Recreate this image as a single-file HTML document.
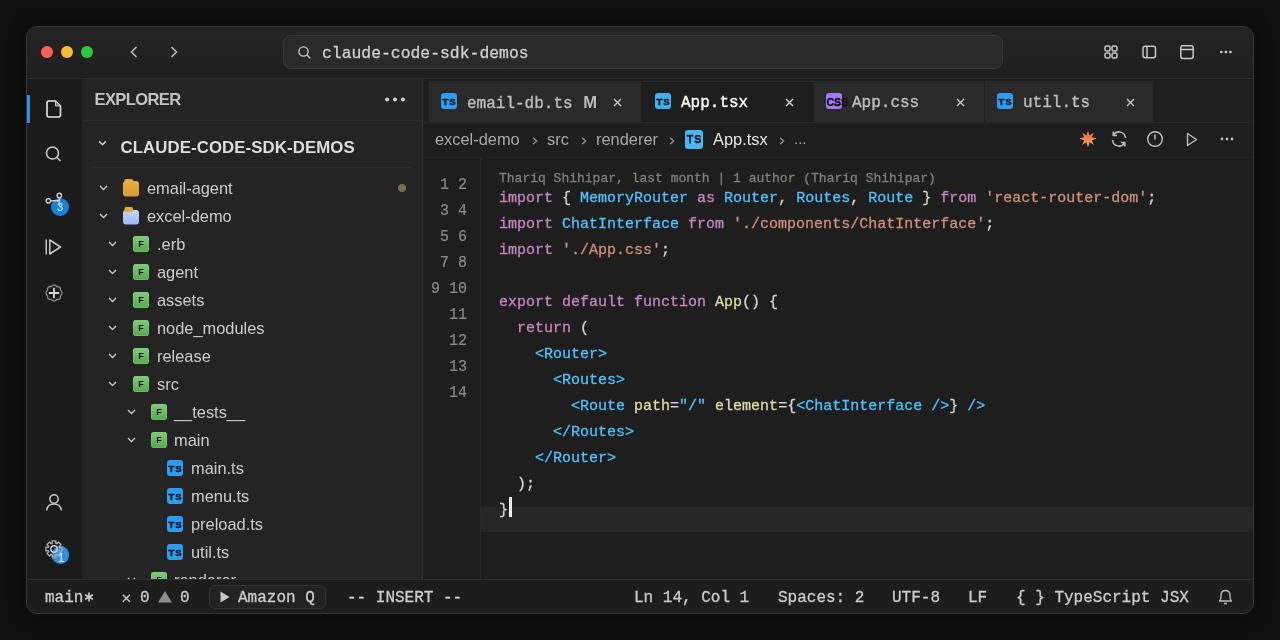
<!DOCTYPE html>
<html><head><meta charset="utf-8">
<style>
*{margin:0;padding:0;box-sizing:border-box}
html,body{width:1280px;height:640px;overflow:hidden;background:#101010;font-family:"Liberation Sans",sans-serif}
.a{position:absolute;white-space:pre}
.m{font-family:"Liberation Mono",monospace}
#win{will-change:transform;position:absolute;left:26px;top:26px;width:1228px;height:588px;border-radius:11px;background:#212121;border:1px solid #363636;overflow:hidden;box-shadow:0 2px 20px rgba(0,0,0,.35)}
#title{position:absolute;left:0;top:0;width:1226px;height:52px;background:linear-gradient(#252525,#1f1f1f);border-bottom:1px solid #2e2e2e}
.tl{position:absolute;top:19px;width:12px;height:12px;border-radius:50%}
#act{position:absolute;left:0;top:52px;width:55px;height:500px;background:#1b1b1b}
#side{position:absolute;left:55px;top:52px;width:341px;height:500px;background:#242424;border-right:1px solid #333333}
#editor{position:absolute;left:396px;top:52px;width:832px;height:500px;background:#1e1e1e}
#status{position:absolute;left:0;top:552px;width:1226px;height:35px;background:#1d1d1d;border-top:1px solid #2e2e2e}
svg{position:absolute;overflow:visible}
.row{position:absolute;left:0;width:340px;height:28px}
.rt{position:absolute;top:0;line-height:28px;font-size:16.4px;color:#cccccc;white-space:pre}
.chev{position:absolute;top:11px}
.fi{position:absolute;top:6px;width:16px;height:16px;border-radius:3px;background:linear-gradient(#80cb7a,#55aa50);box-shadow:inset 0 0 0 0.6px rgba(150,220,140,.5);color:#0a0a0a;font:bold 9px/16px "Liberation Sans",sans-serif;text-align:center}
.ts{position:absolute;width:16px;height:16px;border-radius:3px;background:#2d9df2;color:#06101a;font:bold 9.5px/18px "Liberation Sans",sans-serif;text-align:center;letter-spacing:0.9px;text-indent:0.9px;-webkit-text-stroke:0.35px #06101a}
.tab{position:absolute;top:2px;height:41px;background:#2a2a2a}
.tabt{position:absolute;top:2px;line-height:41px;font-family:"Liberation Mono",monospace;font-size:16px;color:#bdbdbd;white-space:pre;-webkit-text-stroke:0.35px currentColor}
.cl{position:absolute;top:13px}
.code{position:absolute;left:76px;font-family:"Liberation Mono",monospace;font-size:15px;line-height:26px;white-space:pre;color:#d4d4d4;-webkit-text-stroke:0.3px currentColor}
.k{color:#c586c0}.b{color:#4fc1ff}.s{color:#ce9178}.f{color:#dcdcaa}.p{color:#d4d4d4}
.ln{position:absolute;font-family:"Liberation Mono",monospace;font-size:15px;line-height:26px;color:#8a8a8a;white-space:pre;text-align:right;transform:scaleY(1.15);transform-origin:50% 17px;-webkit-text-stroke:0.2px currentColor}
.st{position:absolute;top:1px;line-height:34px;font-family:"Liberation Mono",monospace;font-size:16px;color:#cccccc;white-space:pre;-webkit-text-stroke:0.3px currentColor}
</style></head><body>
<div id="win">
  <div id="title">
    <div class="tl" style="left:14px;background:#fe5f57"></div>
    <div class="tl" style="left:34px;background:#febc2e"></div>
    <div class="tl" style="left:54px;background:#28c840"></div>
    <!-- nav arrows -->
    <svg style="left:103px;top:19px" width="8" height="12" viewBox="0 0 8 12"><path d="M6.5 1 L1.5 6 L6.5 11" fill="none" stroke="#c8c8c8" stroke-width="1.4"/></svg>
    <svg style="left:143px;top:19px" width="8" height="12" viewBox="0 0 8 12"><path d="M1.5 1 L6.5 6 L1.5 11" fill="none" stroke="#c8c8c8" stroke-width="1.4"/></svg>
    <!-- search -->
    <div style="position:absolute;left:256px;top:8px;width:720px;height:34px;border-radius:8px;background:#2a2a2a;border:1px solid #383838"></div>
    <svg style="left:271px;top:19px" width="13" height="13" viewBox="0 0 13 13"><circle cx="5.5" cy="5.5" r="4.6" fill="none" stroke="#c8c8c8" stroke-width="1.4"/><path d="M9 9 L12.2 12.2" stroke="#c8c8c8" stroke-width="1.4"/></svg>
    <div class="a m" style="left:295px;top:0.5px;line-height:52px;font-size:16.4px;color:#d0d0d0;-webkit-text-stroke:0.3px currentColor">claude-code-sdk-demos</div>
    <!-- right icons -->
    <svg style="left:1077px;top:18px" width="14" height="14" viewBox="0 0 14 14" fill="none" stroke="#c8c8c8" stroke-width="1.5"><rect x="1" y="1" width="5" height="5" rx="1.6"/><rect x="8" y="1" width="5" height="5" rx="1.6"/><rect x="1" y="8" width="5" height="5" rx="1.6"/><rect x="8" y="8" width="5" height="5" rx="1.6"/></svg>
    <svg style="left:1115px;top:18px" width="14" height="14" viewBox="0 0 14 14" fill="none" stroke="#c8c8c8" stroke-width="1.5"><rect x="1" y="1.2" width="12.5" height="11.6" rx="2.2"/><path d="M5 1.2 V12.8"/></svg>
    <svg style="left:1153px;top:18px" width="14" height="14" viewBox="0 0 14 14" fill="none" stroke="#c8c8c8" stroke-width="1.5"><rect x="0.8" y="0.8" width="12.4" height="12.6" rx="2.2"/><path d="M0.8 4.6 H13.2"/></svg>
    <svg style="left:1193px;top:23px" width="12" height="4" viewBox="0 0 12 4" fill="#d0d0d0"><circle cx="1.4" cy="2" r="1.35"/><circle cx="5.9" cy="2" r="1.35"/><circle cx="10.4" cy="2" r="1.35"/></svg>
  </div>

  <!-- activity bar -->
  <div id="act">
    <div style="position:absolute;left:0;top:16px;width:2.5px;height:28px;background:#2f8ff0;border-radius:0 1px 1px 0"></div>
    <!-- file -->
    <svg style="left:19px;top:21px" width="16" height="18" viewBox="0 0 16 18" fill="none" stroke="#e8e8e8" stroke-width="1.6" stroke-linejoin="round"><path d="M3 1 H9.5 L14.5 6 V15 Q14.5 17 12.5 17 H3 Q1 17 1 15 V3 Q1 1 3 1 Z"/><path d="M9.5 1.5 V6 H14" fill="#777" stroke-width="0.8"/></svg>
    <!-- search -->
    <svg style="left:18px;top:67px" width="18" height="17" viewBox="0 0 18 17" fill="none" stroke="#c8c8c8" stroke-width="1.6"><circle cx="7.5" cy="7" r="6"/><path d="M11.8 11.3 L15.5 15"/></svg>
    <!-- source control -->
    <div style="position:absolute;left:24px;top:119px;width:18px;height:18px;border-radius:50%;background:#1581d8"></div>
    <div style="position:absolute;left:24px;top:119px;width:18px;height:18px;color:#f0f0f0;font:11px/19px 'Liberation Sans',sans-serif;text-align:center">3</div>
    <svg style="left:15px;top:110px" width="26" height="26" viewBox="0 0 26 26" fill="none" stroke="#cfcfcf" stroke-width="1.4"><circle cx="6.4" cy="11.8" r="2.2"/><circle cx="17.3" cy="6.4" r="2.2"/><path d="M8.6 11.8 H17.3 M17.3 8.6 V17"/></svg>
    <!-- run -->
    <svg style="left:18px;top:160px" width="17" height="16" viewBox="0 0 17 16" fill="none" stroke="#c8c8c8" stroke-width="1.5"><path d="M1.2 0.5 V15.5"/><path d="M4.8 1 L15.5 8 L4.8 15 Z" stroke-linejoin="round"/></svg>
    <!-- extensions -->
    <svg style="left:18px;top:205px" width="18" height="18" viewBox="0 0 18 18" fill="none" stroke="#8a8a8a" stroke-width="1.3"><path d="M15.47 6.32 Q18.60 9.00 15.47 11.68 Q15.79 15.79 11.68 15.47 Q9.00 18.60 6.32 15.47 Q2.21 15.79 2.53 11.68 Q-0.60 9.00 2.53 6.32 Q2.21 2.21 6.32 2.53 Q9.00 -0.60 11.68 2.53 Q15.79 2.21 15.47 6.32 Z" stroke-linejoin="round"/><path d="M9 3.8 V14.2 M3.8 9 H14.2" stroke="#d8d8d8" stroke-width="1.8"/></svg>
    <!-- account -->
    <svg style="left:18px;top:415px" width="18" height="17" viewBox="0 0 18 17" fill="none" stroke="#c8c8c8" stroke-width="1.5"><circle cx="9" cy="5" r="4.2"/><path d="M1.5 16.5 Q2.5 10 9 10 Q15.5 10 16.5 16.5"/></svg>
    <!-- gear -->
    <div style="position:absolute;left:24.5px;top:467px;width:17.5px;height:17.5px;border-radius:50%;background:#2e8fe6"></div>
    <svg style="left:18px;top:461px" width="18" height="18" viewBox="0 0 18 18" fill="none" stroke="#a8a8a8" stroke-width="1.4"><path d="M7.25 3.26 L7.13 0.91 L10.87 0.91 L10.75 3.26 A6.0 6.0 0 0 1 11.82 3.70 L11.82 3.70 L13.40 1.96 L16.04 4.60 L14.30 6.18 A6.0 6.0 0 0 1 14.74 7.25 L14.74 7.25 L17.09 7.13 L17.09 10.87 L14.74 10.75 A6.0 6.0 0 0 1 14.30 11.82 L14.30 11.82 L16.04 13.40 L13.40 16.04 L11.82 14.30 A6.0 6.0 0 0 1 10.75 14.74 L10.75 14.74 L10.87 17.09 L7.13 17.09 L7.25 14.74 A6.0 6.0 0 0 1 6.18 14.30 L6.18 14.30 L4.60 16.04 L1.96 13.40 L3.70 11.82 A6.0 6.0 0 0 1 3.26 10.75 L3.26 10.75 L0.91 10.87 L0.91 7.13 L3.26 7.25 A6.0 6.0 0 0 1 3.70 6.18 L3.70 6.18 L1.96 4.60 L4.60 1.96 L6.18 3.70 A6.0 6.0 0 0 1 7.25 3.26 Z" stroke-linejoin="round"/><circle cx="9" cy="9" r="3.2" stroke="#cfcfcf"/></svg>
    <div style="position:absolute;left:29px;top:473px;width:10px;height:12px;color:#f4f4f4;font:12px/12px 'Liberation Sans',sans-serif;text-align:center">1</div>
  </div>

  <!-- sidebar -->
  <div id="side">
    <div class="a" style="left:12.5px;top:-1px;line-height:42px;font-size:16.5px;letter-spacing:-0.6px;font-weight:bold;color:#c2c2c2">EXPLORER</div>
    <svg style="left:303px;top:17.5px" width="20" height="5" viewBox="0 0 20 5" fill="#d0d0d0"><circle cx="2.1" cy="2.5" r="2"/><circle cx="10" cy="2.5" r="2"/><circle cx="17.9" cy="2.5" r="2"/></svg>
    <div style="position:absolute;left:0;top:41px;width:340px;height:1px;background:#2c2c2c"></div>
    <svg style="left:16px;top:61px" width="9" height="6" viewBox="0 0 8 5"><path d="M1 1 L4 4 L7 1" fill="none" stroke="#c8c8c8" stroke-width="1.4"/></svg>
    <div class="a" style="left:38.5px;top:68.5px;line-height:0;font-size:16.8px;letter-spacing:0.1px;font-weight:bold;color:#dedede">CLAUDE-CODE-SDK-DEMOS</div>
    <div style="position:absolute;left:8px;top:88px;width:323px;height:1px;background:#2e2e2e"></div>

    <div class="row" style="top:95px"><svg class="chev" style="left:17px" width="9" height="6" viewBox="0 0 9 6"><path d="M1 1 L4.5 4.5 L8 1" fill="none" stroke="#c8c8c8" stroke-width="1.4"/></svg><svg style="left:41px;top:5px" width="16" height="18" viewBox="0 0 16 18"><defs><linearGradient id="fy" x1="0" y1="0" x2="0" y2="1"><stop offset="0" stop-color="#e8ad45"/><stop offset="1" stop-color="#d99a30"/></linearGradient></defs><rect x="1.5" y="0" width="8.5" height="5" rx="1.5" fill="#e6a83e"/><rect x="0" y="2" width="16" height="15.5" rx="3" fill="url(#fy)"/></svg><div class="rt" style="left:65px">email-agent</div><div style="position:absolute;left:316px;top:10px;width:8px;height:8px;border-radius:50%;background:#7b6d4b"></div></div>
<div class="row" style="top:123px"><svg class="chev" style="left:17px" width="9" height="6" viewBox="0 0 9 6"><path d="M1 1 L4.5 4.5 L8 1" fill="none" stroke="#c8c8c8" stroke-width="1.4"/></svg><svg style="left:41px;top:5px" width="16" height="18" viewBox="0 0 16 18"><defs><linearGradient id="fb" x1="0" y1="0" x2="0" y2="1"><stop offset="0" stop-color="#c4d6ff"/><stop offset="1" stop-color="#9fb8f8"/></linearGradient></defs><rect x="0" y="3" width="16" height="14.5" rx="3" fill="url(#fb)"/><rect x="1.5" y="0" width="8.5" height="5" rx="1.5" fill="#e6a83e"/></svg><div class="rt" style="left:65px">excel-demo</div></div>
<div class="row" style="top:151px"><svg class="chev" style="left:26px" width="9" height="6" viewBox="0 0 9 6"><path d="M1 1 L4.5 4.5 L8 1" fill="none" stroke="#c8c8c8" stroke-width="1.4"/></svg><div class="fi" style="left:51px">F</div><div class="rt" style="left:75px">.erb</div></div>
<div class="row" style="top:179px"><svg class="chev" style="left:26px" width="9" height="6" viewBox="0 0 9 6"><path d="M1 1 L4.5 4.5 L8 1" fill="none" stroke="#c8c8c8" stroke-width="1.4"/></svg><div class="fi" style="left:51px">F</div><div class="rt" style="left:75px">agent</div></div>
<div class="row" style="top:207px"><svg class="chev" style="left:26px" width="9" height="6" viewBox="0 0 9 6"><path d="M1 1 L4.5 4.5 L8 1" fill="none" stroke="#c8c8c8" stroke-width="1.4"/></svg><div class="fi" style="left:51px">F</div><div class="rt" style="left:75px">assets</div></div>
<div class="row" style="top:235px"><svg class="chev" style="left:26px" width="9" height="6" viewBox="0 0 9 6"><path d="M1 1 L4.5 4.5 L8 1" fill="none" stroke="#c8c8c8" stroke-width="1.4"/></svg><div class="fi" style="left:51px">F</div><div class="rt" style="left:75px">node_modules</div></div>
<div class="row" style="top:263px"><svg class="chev" style="left:26px" width="9" height="6" viewBox="0 0 9 6"><path d="M1 1 L4.5 4.5 L8 1" fill="none" stroke="#c8c8c8" stroke-width="1.4"/></svg><div class="fi" style="left:51px">F</div><div class="rt" style="left:75px">release</div></div>
<div class="row" style="top:291px"><svg class="chev" style="left:26px" width="9" height="6" viewBox="0 0 9 6"><path d="M1 1 L4.5 4.5 L8 1" fill="none" stroke="#c8c8c8" stroke-width="1.4"/></svg><div class="fi" style="left:51px">F</div><div class="rt" style="left:75px">src</div></div>
<div class="row" style="top:319px"><svg class="chev" style="left:45px" width="9" height="6" viewBox="0 0 9 6"><path d="M1 1 L4.5 4.5 L8 1" fill="none" stroke="#c8c8c8" stroke-width="1.4"/></svg><div class="fi" style="left:69px">F</div><div class="rt" style="left:92px">__tests__</div></div>
<div class="row" style="top:347px"><svg class="chev" style="left:45px" width="9" height="6" viewBox="0 0 9 6"><path d="M1 1 L4.5 4.5 L8 1" fill="none" stroke="#c8c8c8" stroke-width="1.4"/></svg><div class="fi" style="left:69px">F</div><div class="rt" style="left:92px">main</div></div>
<div class="row" style="top:375px"><div class="ts" style="left:85px;top:6px">TS</div><div class="rt" style="left:109px">main.ts</div></div>
<div class="row" style="top:403px"><div class="ts" style="left:85px;top:6px">TS</div><div class="rt" style="left:109px">menu.ts</div></div>
<div class="row" style="top:431px"><div class="ts" style="left:85px;top:6px">TS</div><div class="rt" style="left:109px">preload.ts</div></div>
<div class="row" style="top:459px"><div class="ts" style="left:85px;top:6px">TS</div><div class="rt" style="left:109px">util.ts</div></div>
<div class="row" style="top:487px"><svg class="chev" style="left:45px" width="9" height="6" viewBox="0 0 9 6"><path d="M1 1 L4.5 4.5 L8 1" fill="none" stroke="#c8c8c8" stroke-width="1.4"/></svg><div class="fi" style="left:69px">F</div><div class="rt" style="left:92px">renderer</div></div>
  </div>

  <!-- editor -->
  <div id="editor">
    <!-- tabs bar -->
    <div style="position:absolute;left:0;top:0;width:832px;height:44px;background:#1f1f1f"></div>
    <div class="tab" style="left:6px;width:212px">
      <div class="ts" style="left:12px;top:12px">TS</div>
      <div class="tabt" style="left:38px;top:1px">email-db.ts <b style="-webkit-text-stroke:0;font-family:'Liberation Sans',sans-serif;font-size:16.5px;margin-left:1px">M</b></div>
      <svg class="cl" style="left:184px;top:17px" width="9" height="9" viewBox="0 0 9 9"><path d="M1 1 L8 8 M8 1 L1 8" stroke="#c8c8c8" stroke-width="1.4"/></svg>
    </div>
    <div class="tab" style="left:219px;width:172px;background:#1e1e1e;border-top:1px solid #2a2a2a">
      <div class="ts" style="left:13px;top:11px;background:#3cb0f0">TS</div>
      <div class="tabt" style="left:39px;top:1px;color:#ffffff">App.tsx</div>
      <svg class="cl" style="left:143px;top:16px" width="9" height="9" viewBox="0 0 9 9"><path d="M1 1 L8 8 M8 1 L1 8" stroke="#d8d8d8" stroke-width="1.4"/></svg>
    </div>
    <div class="tab" style="left:391px;width:170px">
      <div class="ts" style="left:12px;top:12px;background:#a878f4;color:#10081c;font-size:10.5px;letter-spacing:0px;text-align:left;text-indent:0.5px;overflow:visible;-webkit-text-stroke:0.4px #10081c">CS<span style="color:#1c1028;-webkit-text-stroke:0.4px #1c1028">S</span></div>
      <div class="tabt" style="left:38px">App.css</div>
      <svg class="cl" style="left:142px;top:17px" width="9" height="9" viewBox="0 0 9 9"><path d="M1 1 L8 8 M8 1 L1 8" stroke="#c8c8c8" stroke-width="1.4"/></svg>
    </div>
    <div class="tab" style="left:562px;width:168px">
      <div class="ts" style="left:12px;top:12px">TS</div>
      <div class="tabt" style="left:38px">util.ts</div>
      <svg class="cl" style="left:141px;top:17px" width="9" height="9" viewBox="0 0 9 9"><path d="M1 1 L8 8 M8 1 L1 8" stroke="#c8c8c8" stroke-width="1.4"/></svg>
    </div>
    <div style="position:absolute;left:0;top:43px;width:832px;height:1px;background:#2a2a2a"></div>

    <!-- breadcrumbs -->
    <div class="a" style="left:12px;top:43px;line-height:34px;font-size:16.4px;color:#a9a9a9">excel-demo</div>
    <svg style="left:108.6px;top:57.5px" width="6" height="8" viewBox="0 0 6 8"><path d="M1 0.8 L4.6 4 L1 7.2" fill="none" stroke="#8c8c8c" stroke-width="1.4"/></svg>
    <div class="a" style="left:124px;top:43px;line-height:34px;font-size:16.4px;color:#a9a9a9">src</div>
    <svg style="left:158.2px;top:57.5px" width="6" height="8" viewBox="0 0 6 8"><path d="M1 0.8 L4.6 4 L1 7.2" fill="none" stroke="#8c8c8c" stroke-width="1.4"/></svg>
    <div class="a" style="left:173px;top:43px;line-height:34px;font-size:16.4px;color:#a9a9a9">renderer</div>
    <svg style="left:245.6px;top:57.5px" width="6" height="8" viewBox="0 0 6 8"><path d="M1 0.8 L4.6 4 L1 7.2" fill="none" stroke="#8c8c8c" stroke-width="1.4"/></svg>
    <div class="ts" style="left:262px;top:51px;width:18px;height:18.5px;line-height:19px;font-size:10.5px;background:#45b8f4">TS</div>
    <div class="a" style="left:290px;top:43px;line-height:34px;font-size:16.4px;color:#e6e6e6">App.tsx</div>
    <svg style="left:355.8px;top:57.5px" width="6" height="8" viewBox="0 0 6 8"><path d="M1 0.8 L4.6 4 L1 7.2" fill="none" stroke="#8c8c8c" stroke-width="1.4"/></svg>
    <div class="a" style="left:371px;top:43px;line-height:34px;font-size:15px;color:#a9a9a9">...</div>

    <!-- breadcrumb right icons -->
    <svg style="left:656px;top:51px" width="18" height="18" viewBox="0 0 18 18"><defs><linearGradient id="g1" x1="0" y1="0" x2="0" y2="1"><stop offset="0" stop-color="#ef5f45"/><stop offset="0.55" stop-color="#f08a55"/><stop offset="1" stop-color="#f2b878"/></linearGradient></defs><path d="M9 0.5 L10.6 5.2 L14.8 2.8 L12.8 7 L17.5 8.6 L12.8 10.4 L14.8 15 L10.6 12.3 L9 17.5 L7.4 12.3 L3.2 15 L5.2 10.4 L0.5 8.6 L5.2 7 L3.2 2.8 L7.4 5.2 Z" fill="url(#g1)"/></svg>
    <svg style="left:687px;top:51px" width="18" height="18" viewBox="0 0 18 18" fill="none" stroke="#bdbdbd" stroke-width="1.5"><g transform="translate(18,0) scale(-1,1)"><path d="M2.5 8 A6.5 6.5 0 0 1 14.5 5"/><path d="M15.5 10 A6.5 6.5 0 0 1 3.5 13"/><path d="M14.8 1.5 V5.5 H11"/><path d="M3.2 16.5 V12.5 H7"/></g></svg>
    <svg style="left:723px;top:51px" width="18" height="18" viewBox="0 0 18 18" fill="none" stroke="#bdbdbd" stroke-width="1.5"><circle cx="9" cy="9" r="7.3"/><path d="M9 4.5 V9.5"/></svg>
    <svg style="left:763px;top:53px" width="12" height="15" viewBox="0 0 12 15" fill="none" stroke="#bdbdbd" stroke-width="1.4"><path d="M1.5 1.5 L10.5 7.5 L1.5 13.5 Z" stroke-linejoin="round"/></svg>
    <svg style="left:797px;top:58px" width="14" height="4" viewBox="0 0 14 4" fill="#bdbdbd"><circle cx="2" cy="2" r="1.4"/><circle cx="7" cy="2" r="1.4"/><circle cx="12" cy="2" r="1.4"/></svg>
    <div style="position:absolute;left:0;top:78px;width:832px;height:1px;background:#262626"></div>

    <!-- gutter -->
    <div style="position:absolute;left:57px;top:79px;width:1px;height:422px;background:#282828"></div>
    <!-- current line -->
    <div style="position:absolute;left:58px;top:428px;width:774px;height:25px;background:#262626"></div>

    <div class="ln" style="right:788px;top:94px">1 2</div>
<div class="ln" style="right:788px;top:120px">3 4</div>
<div class="ln" style="right:788px;top:146px">5 6</div>
<div class="ln" style="right:788px;top:172px">7 8</div>
<div class="ln" style="right:788px;top:198px">9 10</div>
<div class="ln" style="right:788px;top:224px">11</div>
<div class="ln" style="right:788px;top:250px">12</div>
<div class="ln" style="right:788px;top:276px">13</div>
<div class="ln" style="right:788px;top:302px">14</div>
    <div class="code" style="top:87px;font-size:13px;color:#7f7f7f">Thariq Shihipar, last month | 1 author (Thariq Shihipar)</div>
<div class="code" style="top:107px"><span class="k">import</span> { <span class="b">MemoryRouter</span> <span class="k">as</span> <span class="b">Router</span>, <span class="b">Routes</span>, <span class="b">Route</span> } <span class="k">from</span> <span class="s">'react-router-dom'</span>;</div>
<div class="code" style="top:133px"><span class="k">import</span> <span class="b">ChatInterface</span> <span class="k">from</span> <span class="s">'./components/ChatInterface'</span>;</div>
<div class="code" style="top:159px"><span class="k">import</span> <span class="s">'./App.css'</span>;</div>
<div class="code" style="top:185px"></div>
<div class="code" style="top:211px"><span class="k">export</span> <span class="k">default</span> <span class="k">function</span> <span class="f">App</span>() {</div>
<div class="code" style="top:237px">  <span class="k">return</span> (</div>
<div class="code" style="top:263px">    <span class="b">&lt;Router&gt;</span></div>
<div class="code" style="top:289px">      <span class="b">&lt;Routes&gt;</span></div>
<div class="code" style="top:315px">        <span class="b">&lt;Route</span> <span class="f">path</span>=<span class="b">"/"</span> <span class="f">element</span>={<span class="b">&lt;ChatInterface /&gt;</span>} <span class="b">/&gt;</span></div>
<div class="code" style="top:341px">      <span class="b">&lt;/Routes&gt;</span></div>
<div class="code" style="top:367px">    <span class="b">&lt;/Router&gt;</span></div>
<div class="code" style="top:393px">  );</div>
<div class="code" style="top:419px">}</div>
<div style="position:absolute;left:86px;top:418px;width:2.5px;height:20px;background:#f0f0f0"></div>
  </div>

  <!-- status -->
  <div id="status">
    <div class="st" style="left:18px">main</div><svg style="left:57px;top:12px" width="10" height="10" viewBox="0 0 10 10" stroke="#cfcfcf" stroke-width="1.6"><path d="M5 0.5 V9.5 M1.1 2.75 L8.9 7.25 M1.1 7.25 L8.9 2.75"/></svg>
    <svg style="left:95px;top:14px" width="9" height="9" viewBox="0 0 9 9"><path d="M0.8 0.8 L7.8 7.8 M7.8 0.8 L0.8 7.8" stroke="#c8c8c8" stroke-width="1.4"/></svg>
    <div class="st" style="left:113px">0</div>
    <svg style="left:131px;top:11px" width="15" height="12" viewBox="0 0 15 12"><path d="M7 0 L14 11.5 H0 Z" fill="#8c8c8c"/></svg>
    <div class="st" style="left:153px">0</div>
    <div style="position:absolute;left:182px;top:5px;width:117px;height:24px;border-radius:6px;border:1px solid #343434;background:#222"></div>
    <svg style="left:193px;top:11px" width="10" height="12" viewBox="0 0 10 12"><path d="M0.5 0.5 L9.5 6 L0.5 11.5 Z" fill="#c8c8c8"/></svg>
    <div class="st" style="left:211px">Amazon Q</div>
    <div class="st" style="left:320px">-- INSERT --</div>
    <div class="st" style="left:607px">Ln 14, Col 1</div>
    <div class="st" style="left:751px">Spaces: 2</div>
    <div class="st" style="left:865px">UTF-8</div>
    <div class="st" style="left:941px">LF</div>
    <div class="st" style="left:989px">{ } TypeScript JSX</div>
    <svg style="left:1191px;top:9px" width="15" height="16" viewBox="0 0 15 16" fill="none" stroke="#bdbdbd" stroke-width="1.3"><path d="M1.5 12 Q3 10.5 3 8 V6.5 Q3 1.5 7.5 1.5 Q12 1.5 12 6.5 V8 Q12 10.5 13.5 12 Z" stroke-linejoin="round"/><path d="M6 14.5 H9" stroke-width="1.5"/></svg>
  </div>
</div>
</body></html>
